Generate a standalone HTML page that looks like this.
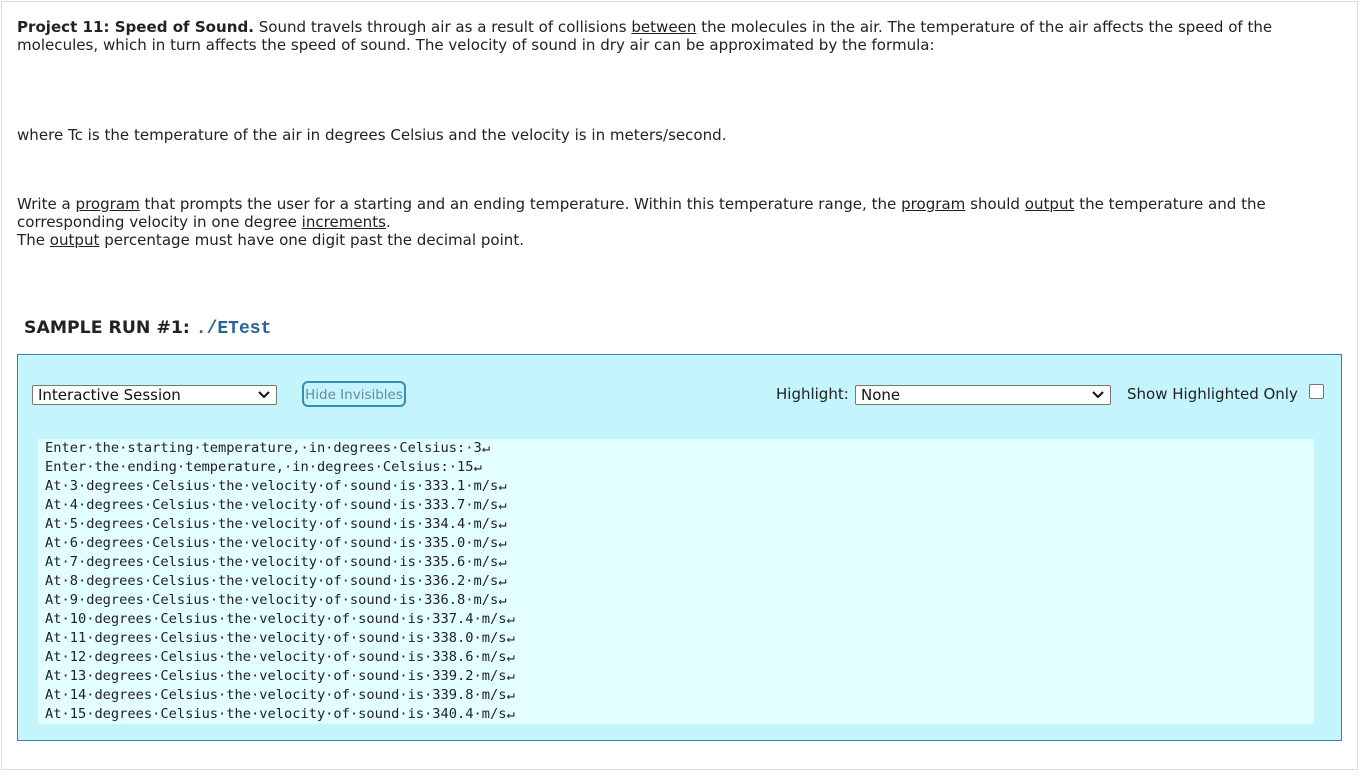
<!DOCTYPE html>
<html><head><meta charset="utf-8"><style>
body{margin:0;background:#fff;font-family:"DejaVu Sans",Verdana,sans-serif;font-size:15.05px;color:#222;}
.outer{position:absolute;left:1px;top:1px;width:1355px;height:767px;border:1px solid #ddd;}
.p{position:absolute;left:17px;line-height:18px;margin:0;width:1300px;}
u{text-decoration:underline;}
h3{position:absolute;left:24px;top:318px;margin:0;font-family:"DejaVu Sans",sans-serif;font-size:17.3px;font-weight:bold;color:#222;}
h3 code{font-family:"Liberation Mono",monospace;color:#2a6496;font-size:18px;font-weight:bold;}
.box{position:absolute;left:17px;top:354px;width:1323px;height:385px;background:#c4f5fd;border:1px solid #3384ac;}
.sel{position:absolute;background:#fff;border:1px solid #767676;border-radius:2px;height:20px;box-sizing:border-box;font-size:15px;line-height:18px;padding-left:5px;color:#111;}
.sel svg{position:absolute;right:6px;top:5px;}
.btn{position:absolute;left:284px;top:26px;width:104px;height:26px;box-sizing:border-box;border:2px solid #3a8bb0;border-radius:6px;font-size:13.5px;color:#6a8a9a;line-height:24px;text-align:center;}
.pre{position:absolute;left:20px;top:84px;width:1276px;height:285px;background:#e2feff;font-family:"DejaVu Sans Mono",monospace;font-size:13.7px;line-height:19px;color:#222;padding:0 0 0 7px;box-sizing:border-box;white-space:pre;}
.pre div{height:19px}
</style></head><body>
<div class="outer"></div>
<p class="p" style="top:18px"><b>Project 11: Speed of Sound.</b> Sound travels through air as a result of collisions <u>between</u> the molecules in the air. The temperature of the air affects the speed of the molecules, which in turn affects the speed of sound. The velocity of sound in dry air can be approximated by the formula:</p>
<p class="p" style="top:126px">where Tc is the temperature of the air in degrees Celsius and the velocity is in meters/second.</p>
<p class="p" style="top:195px">Write a <u>program</u> that prompts the user for a starting and an ending temperature. Within this temperature range, the <u>program</u> should <u>output</u> the temperature and the corresponding velocity in one degree <u>increments</u>.<br>The <u>output</u> percentage must have one digit past the decimal point.</p>
<h3>SAMPLE RUN #1: <code>./ETest</code></h3>
<div class="box">
<div class="sel" style="left:14px;top:30px;width:245px;">Interactive Session<svg width="12" height="8"><path d="M1 1l5 5 5-5" stroke="#111" stroke-width="2" fill="none"/></svg></div>
<div class="btn">Hide Invisibles</div>
<div style="position:absolute;left:758px;top:30px;font-size:15px;color:#222">Highlight:</div>
<div class="sel" style="left:837px;top:30px;width:256px;">None<svg width="12" height="8"><path d="M1 1l5 5 5-5" stroke="#111" stroke-width="2" fill="none"/></svg></div>
<div style="position:absolute;left:1109px;top:30px;font-size:15px;color:#222">Show Highlighted Only</div>
<div style="position:absolute;left:1291px;top:29px;width:13px;height:13px;border:1px solid #767676;border-radius:2px;background:#fff"></div>
<div class="pre"><div>Enter·the·starting·temperature,·in·degrees·Celsius:·3↵</div><div>Enter·the·ending·temperature,·in·degrees·Celsius:·15↵</div><div>At·3·degrees·Celsius·the·velocity·of·sound·is·333.1·m/s↵</div><div>At·4·degrees·Celsius·the·velocity·of·sound·is·333.7·m/s↵</div><div>At·5·degrees·Celsius·the·velocity·of·sound·is·334.4·m/s↵</div><div>At·6·degrees·Celsius·the·velocity·of·sound·is·335.0·m/s↵</div><div>At·7·degrees·Celsius·the·velocity·of·sound·is·335.6·m/s↵</div><div>At·8·degrees·Celsius·the·velocity·of·sound·is·336.2·m/s↵</div><div>At·9·degrees·Celsius·the·velocity·of·sound·is·336.8·m/s↵</div><div>At·10·degrees·Celsius·the·velocity·of·sound·is·337.4·m/s↵</div><div>At·11·degrees·Celsius·the·velocity·of·sound·is·338.0·m/s↵</div><div>At·12·degrees·Celsius·the·velocity·of·sound·is·338.6·m/s↵</div><div>At·13·degrees·Celsius·the·velocity·of·sound·is·339.2·m/s↵</div><div>At·14·degrees·Celsius·the·velocity·of·sound·is·339.8·m/s↵</div><div>At·15·degrees·Celsius·the·velocity·of·sound·is·340.4·m/s↵</div></div>
</div>
</body></html>
